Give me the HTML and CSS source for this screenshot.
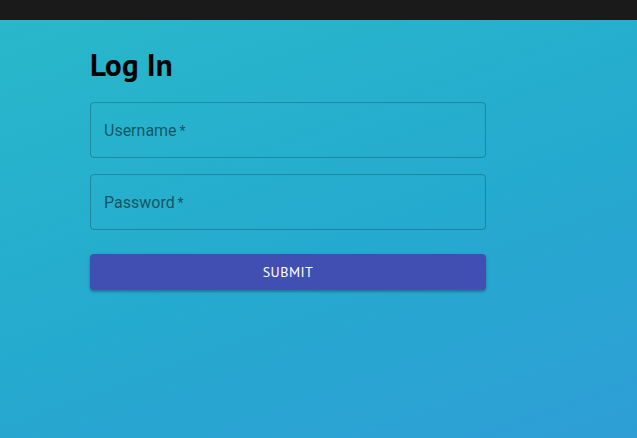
FILE: index.html
```html
<!DOCTYPE html>
<html>
<head>
<meta charset="utf-8">
<link rel="stylesheet" href="styles.css">
</head>
<body>
<div class="topbar"></div>
<main class="page">
  <form class="login">
    <h1 class="title">Log In</h1>
    <label class="field"><span class="field-label">Username<span class="req">&thinsp;*</span></span></label>
    <label class="field"><span class="field-label">Password<span class="req">&thinsp;*</span></span></label>
    <button type="button" class="submit">SUBMIT</button>
  </form>
</main>
</body>
</html>
```
FILE: styles.css
```css
html, body {
  margin: 0;
  padding: 0;
  height: 100%;
}
body {
  display: flex;
  flex-direction: column;
  background: linear-gradient(160deg, #29b9ca 0%, #25aacf 55%, #2e9ed5 100%);
  font-family: Roboto, "Liberation Sans", sans-serif;
}
.topbar {
  height: 20px;
  background: #1b1a1b;
  flex: none;
}
.page {
  flex: 1;
  padding: 0 0 0 90px;
}
.login {
  width: 396px;
  display: flex;
  flex-direction: column;
}
.title {
  margin: 27px 0 0 0;
  font-family: "PT Sans", "Open Sans", sans-serif;
  font-weight: 700;
  font-size: 31px;
  line-height: 36px;
  color: #000;
  letter-spacing: 0.2px;
}
.field {
  margin-top: 19px;
  height: 56px;
  box-sizing: border-box;
  border: 1px solid rgba(0, 0, 0, 0.22);
  border-radius: 4px;
  display: flex;
  align-items: center;
  padding-left: 13px;
}
.field + .field {
  margin-top: 16px;
}
.field-label {
  font-size: 16px;
  color: rgba(0, 0, 0, 0.54);
}
.req {
  font-size: 14px;
}
.submit {
  margin-top: 24px;
  height: 36px;
  border: none;
  border-radius: 4px;
  background: #414fb3;
  color: #fff;
  font-family: "PT Sans", "Open Sans", sans-serif;
  font-size: 14px;
  letter-spacing: 0.5px;
  box-shadow: 0 2px 2px rgba(0,0,0,0.2), 0 1px 4px rgba(0,0,0,0.12);
  padding: 0;
}
```
